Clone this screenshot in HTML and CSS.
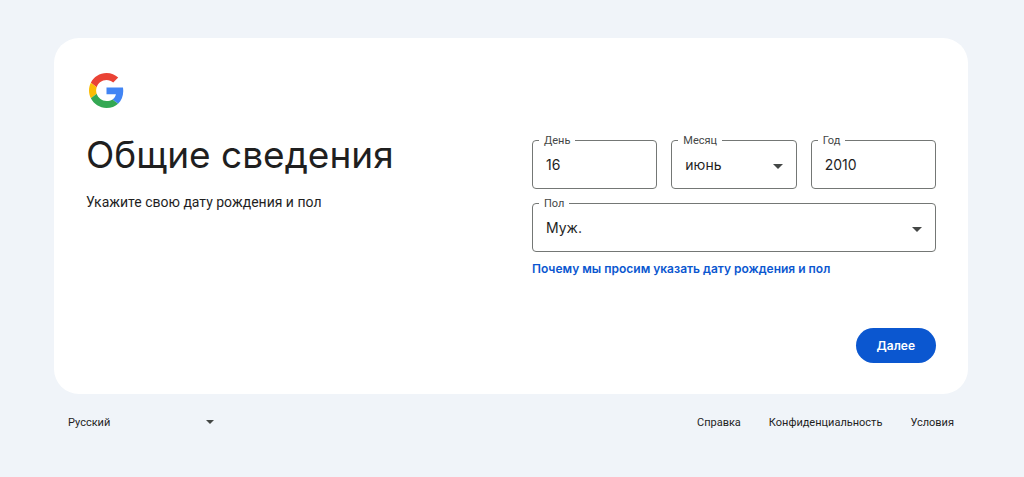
FILE: index.html
```html
<!DOCTYPE html>
<html lang="ru">
<head>
<meta charset="utf-8">
<meta name="viewport" content="width=device-width, initial-scale=1">
<title>Общие сведения</title>
<link rel="stylesheet" href="styles.css">
</head>
<body>
<div class="page">
  <main class="card">
    <svg class="logo" viewBox="0 0 48 48" role="img" aria-label="Google">
      <path fill="#EA4335" d="M24 9.5c3.54 0 6.71 1.22 9.21 3.6l6.85-6.85C35.9 2.38 30.47 0 24 0 14.62 0 6.51 5.38 2.56 13.22l7.98 6.19C12.43 13.72 17.74 9.5 24 9.5z"/>
      <path fill="#4285F4" d="M46.98 24.55c0-1.57-.15-3.09-.38-4.55H24v9.02h12.94c-.58 2.96-2.26 5.48-4.78 7.18l7.73 6c4.51-4.18 7.09-10.36 7.09-17.65z"/>
      <path fill="#FBBC05" d="M10.53 28.59c-.48-1.45-.76-2.99-.76-4.59s.27-3.14.76-4.59l-7.98-6.19C.92 16.46 0 20.12 0 24c0 3.88.92 7.54 2.56 10.78l7.97-6.19z"/>
      <path fill="#34A853" d="M24 48c6.48 0 11.93-2.13 15.89-5.81l-7.73-6c-2.15 1.45-4.92 2.3-8.16 2.3-6.26 0-11.57-4.22-13.47-9.91l-7.98 6.19C6.51 42.62 14.62 48 24 48z"/>
    </svg>
    <div class="columns">
      <header class="intro">
        <h1 class="title">Общие сведения</h1>
        <p class="subtitle">Укажите свою дату рождения и пол</p>
      </header>
      <form class="form">
        <div class="date-row">
          <div class="field">
            <label class="field-label" for="day">День</label>
            <input class="control" id="day" type="text" inputmode="numeric" value="16">
          </div>
          <div class="field">
            <label class="field-label" for="month">Месяц</label>
            <select class="control control-select" id="month"><option>июнь</option></select>
            <svg class="arrow" viewBox="0 0 10 5" aria-hidden="true"><path d="M0 0h10L5 5z"/></svg>
          </div>
          <div class="field">
            <label class="field-label" for="year">Год</label>
            <input class="control" id="year" type="text" inputmode="numeric" value="2010">
          </div>
        </div>
        <div class="field">
          <label class="field-label" for="gender">Пол</label>
          <select class="control control-select" id="gender"><option>Муж.</option></select>
          <svg class="arrow" viewBox="0 0 10 5" aria-hidden="true"><path d="M0 0h10L5 5z"/></svg>
        </div>
        <a class="help-link" href="#">Почему мы просим указать дату рождения и пол</a>
        <button class="next" type="submit">Далее</button>
      </form>
    </div>
  </main>
  <footer class="footer">
    <div class="language">
      <select class="language-select" aria-label="Язык"><option>Русский</option></select>
      <svg class="arrow arrow-small" viewBox="0 0 10 5" aria-hidden="true"><path d="M0 0h10L5 5z"/></svg>
    </div>
    <nav class="links">
      <a class="footer-link" href="#">Справка</a>
      <a class="footer-link" href="#">Конфиденциальность</a>
      <a class="footer-link" href="#">Условия</a>
    </nav>
  </footer>
</div>
</body>
</html>
```

FILE: styles.css
```css
* {
  box-sizing: border-box;
}

body {
  margin: 0;
  background: #f0f4f9;
  color: #1f1f1f;
  font-family: Inter, Roboto, "Liberation Sans", sans-serif;
}

.page {
  max-width: 1040px;
  margin: 0 auto;
  padding: 38px 56px 0 54px;
}

.card {
  padding: 32px 32px 31px;
  background: #fff;
  border-radius: 25px;
}

.logo {
  display: block;
  width: 41px;
  height: 41px;
  padding: 3px;
}

.columns {
  display: grid;
  grid-template-columns: 1fr 1fr;
  gap: 42px;
}

.intro {
  padding-top: 21px;
}

.title {
  margin: 0;
  font-size: 37px;
  font-weight: 400;
  line-height: 46px;
  white-space: nowrap;
}

.subtitle {
  margin: 14px 0 0;
  font-family: Roboto, "Liberation Sans", sans-serif;
  font-size: 14px;
  line-height: 20px;
}

.form {
  display: flex;
  flex-direction: column;
  padding-top: 29px;
}

.date-row {
  display: grid;
  grid-template-columns: 1fr 1fr 1fr;
  gap: 14px;
  margin-bottom: 14px;
}

.field {
  position: relative;
}

.field-label {
  position: absolute;
  top: -7px;
  left: 7px;
  padding: 0 5px;
  background: #fff;
  color: #444746;
  font-family: Roboto, "Liberation Sans", sans-serif;
  font-size: 11px;
  line-height: 16px;
}

.control {
  display: block;
  width: 100%;
  height: 49px;
  padding: 0 13px;
  border: 1px solid #747775;
  border-radius: 4px;
  background: transparent;
  color: #1f1f1f;
  font-family: Inter, Roboto, sans-serif;
  font-size: 14px;
  appearance: none;
}

.arrow {
  position: absolute;
  top: 24px;
  right: 14px;
  width: 10px;
  height: 5px;
  fill: #444746;
  pointer-events: none;
}

.help-link {
  align-self: flex-start;
  margin-top: 8px;
  color: #0b57d0;
  font-size: 12px;
  font-weight: 600;
  line-height: 18px;
  text-decoration: none;
  white-space: nowrap;
}

.next {
  align-self: flex-end;
  height: 35px;
  margin-top: 50px;
  padding: 0 21px;
  border: 0;
  border-radius: 18px;
  background: #0b57d0;
  color: #fff;
  font-family: Inter, Roboto, sans-serif;
  font-size: 12px;
  font-weight: 600;
}

.footer {
  display: flex;
  align-items: center;
  justify-content: space-between;
  padding: 14px;
}

.language {
  position: relative;
  width: 153px;
}

.language-select {
  width: 100%;
  height: 28px;
  padding: 0;
  border: 0;
  background: transparent;
  color: #1f1f1f;
  font-family: Roboto, "Liberation Sans", sans-serif;
  font-size: 11px;
  appearance: none;
}

.arrow-small {
  top: 12px;
  right: 7px;
  width: 8px;
  height: 4px;
}

.links {
  display: flex;
  gap: 28px;
}

.footer-link {
  color: #1f1f1f;
  font-family: Roboto, "Liberation Sans", sans-serif;
  font-size: 11px;
  text-decoration: none;
}
```
